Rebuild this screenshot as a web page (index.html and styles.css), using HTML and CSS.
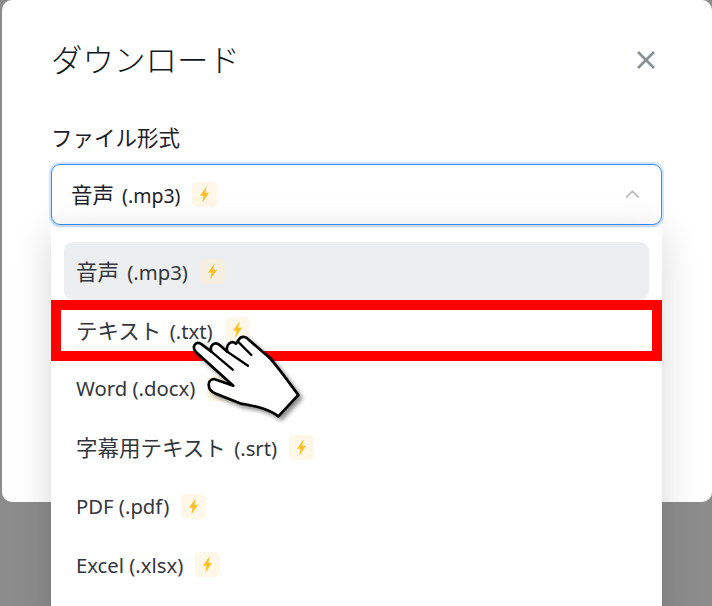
FILE: index.html
```html
<!DOCTYPE html>
<html lang="ja">
<head>
<meta charset="utf-8">
<title>ダウンロード</title>
<link rel="stylesheet" href="styles.css">
</head>
<body>
<svg class="defs" width="0" height="0" aria-hidden="true">
  <symbol id="bolt" viewBox="0 0 12 18"><path d="M8.4 0 1 10.4h3.9L3.6 18 11 7.2H7z"/></symbol>
</svg>
<div class="modal">
  <header class="modal-head">
    <h1 class="title">ダウンロード</h1>
    <svg class="close" viewBox="0 0 20 20"><path d="M2 2l16 16M18 2 2 18"/></svg>
  </header>
  <div class="field">
    <div class="label">ファイル形式</div>
    <div class="select">
      <span class="text"><span class="ja">音声</span> (.mp3)</span>
      <span class="badge"><svg class="bolt"><use href="#bolt"/></svg></span>
      <svg class="chevron" viewBox="0 0 14 8"><path d="M1 7l6-6 6 6"/></svg>
    </div>
    <div class="dropdown">
      <div class="option active"><span class="text"><span class="ja">音声</span> (.mp3)</span><span class="badge"><svg class="bolt"><use href="#bolt"/></svg></span></div>
      <div class="option"><span class="text"><span class="ja">テキスト</span> (.txt)</span><span class="badge"><svg class="bolt"><use href="#bolt"/></svg></span></div>
      <div class="option"><span class="text">Word (.docx)</span><span class="badge"><svg class="bolt"><use href="#bolt"/></svg></span></div>
      <div class="option"><span class="text"><span class="ja">字幕用テキスト</span> (.srt)</span><span class="badge"><svg class="bolt"><use href="#bolt"/></svg></span></div>
      <div class="option"><span class="text">PDF (.pdf)</span><span class="badge"><svg class="bolt"><use href="#bolt"/></svg></span></div>
      <div class="option"><span class="text">Excel (.xlsx)</span><span class="badge"><svg class="bolt"><use href="#bolt"/></svg></span></div>
    </div>
    <div class="highlight"></div>
    <svg class="hand" viewBox="0 0 360 300">
      <path class="hand-fill" d="M17 80C5 66 16 48 32 56L64 80C58 62 72 50 86 58L112 80C106 58 124 44 138 56L146 44C154 32 168 34 176 44L236 96C262 122 302 180 325 210L265 274C232 248 184 242 150 235L78 206C50 196 50 164 72 162L130 182Z"/>
      <path class="hand-line" d="M64 80 128 134M112 80 174 122M144 50 184 90"/>
    </svg>
  </div>
</div>
</body>
</html>
```
FILE: styles.css
```css
* { box-sizing: border-box; }
html, body { margin: 0; height: 606px; overflow: hidden; }
body {
  background: #8c8c8c;
  font-family: "Noto Sans", "Noto Sans CJK JP", sans-serif;
  color: #1d2129;
}
.defs { position: absolute; }
.modal {
  margin-left: 2px;
  height: 502px;
  padding: 36px 0 0 49px;
  background: #fff;
  border-radius: 10px;
}
.modal-head {
  display: flex;
  justify-content: space-between;
  align-items: center;
  width: 605px;
  height: 44px;
  margin-right: 0;
}
.title { margin: 0; font-family: "Noto Sans CJK JP", sans-serif; font-size: 31.5px; font-weight: 300; line-height: 44px; color: #0f1720; }
.close { width: 20px; height: 20px; margin-top: 4px; fill: none; stroke: #8a8f96; stroke-width: 2.6; }
.field { position: relative; width: 611px; margin-top: 42px; }
.label { font-family: "Noto Sans CJK JP", sans-serif; font-size: 21.5px; line-height: 30px; height: 42px; }
.select {
  display: flex;
  align-items: center;
  height: 61px;
  padding-left: 19px;
  padding-right: 21px;
  border: 1px solid #3a8cf2;
  border-radius: 9px;
  box-shadow: 0 0 0 2px #cfe5ff;
}
.text { white-space: nowrap; font-size: 20.3px; line-height: 1; font-weight: 400; }
.select .text { font-size: 19.5px; }
.ja { font-family: "Noto Sans CJK JP", sans-serif; font-size: 21.5px; line-height: 1; margin-right: 3px; }
.badge {
  display: inline-flex;
  align-items: center;
  justify-content: center;
  width: 25px;
  height: 25px;
  margin-left: 12px;
  background: #fff8e8;
  border-radius: 5px;
}
.bolt { width: 11px; height: 17px; fill: #fbbf2a; }
.chevron { width: 15px; height: 9px; margin-left: auto; fill: none; stroke: #bdbdbd; stroke-width: 1.6; }
.dropdown {
  position: absolute;
  left: 0;
  top: 106px;
  width: 611px;
  height: 400px;
  padding: 14px 13px;
  display: flex;
  flex-direction: column;
  gap: 0.8px;
  background: #fff;
  box-shadow: 0 6px 36px rgba(0, 0, 0, 0.16);
}
.option {
  display: flex;
  align-items: center;
  flex: none;
  height: 58px;
  padding-left: 12px;
  border-radius: 9px;
  color: #33373d;
}
.option.active { background: #edeef0; }
.option.active .badge { background: #f5efe2; }
.highlight {
  position: absolute;
  left: 0;
  top: 178px;
  width: 611px;
  height: 61px;
  border: 10px solid #f00;
}
.hand {
  position: absolute;
  left: 139px;
  top: 203px;
  width: 120px;
  height: 100px;
  filter: drop-shadow(3px 3px 2px rgba(0, 0, 0, 0.45));
}
.hand-fill { fill: #fff; stroke: #000; stroke-width: 8; stroke-linejoin: round; }
.hand-line { fill: none; stroke: #000; stroke-width: 7; stroke-linecap: round; }
```
